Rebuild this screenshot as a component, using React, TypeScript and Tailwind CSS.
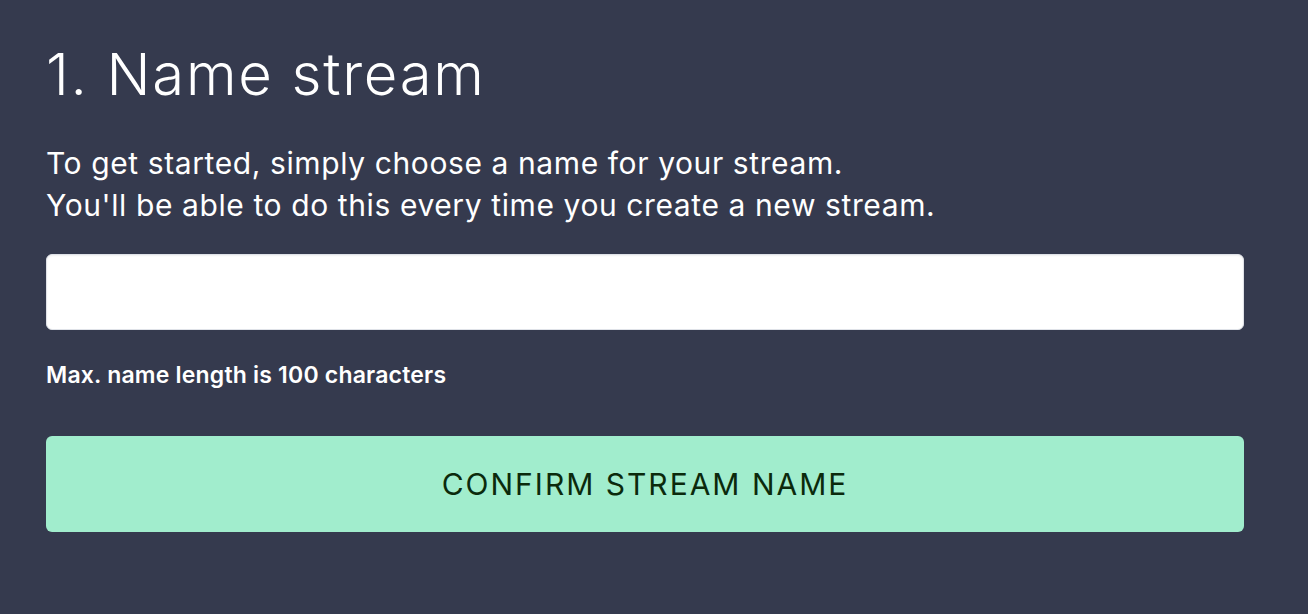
export default function App() {
  return (
    <div className="min-h-[614px] w-full bg-[#353a4e] pl-[46px] pr-[64px] pt-[45px] font-['Inter','Liberation_Sans',sans-serif] text-white">
      <h1 className="text-[58px] font-light leading-[58px] tracking-[1.7px]">1. Name stream</h1>

      <p className="mt-[39px] text-[30px] leading-[42px] tracking-[0.6px]">
        To get started, simply choose a name for your stream.
        <br />
        You'll be able to do this every time you create a new stream.
      </p>

      <input
        type="text"
        className="mt-[28px] block h-[76px] w-full rounded-[6px] border border-[#dfe2e8] bg-white px-4 text-[22px] text-gray-900 shadow-[inset_0_1px_2px_rgba(0,0,0,0.06)] outline-none"
      />

      <p className="mt-[34px] text-[23px] font-semibold leading-[23px] tracking-[0.2px]">Max. name length is 100 characters</p>

      <button
        type="button"
        className="mt-[49px] flex h-[96px] w-full items-center justify-center rounded-[6px] bg-[#a1edcd] text-[30px] font-normal uppercase tracking-[2px] text-[#0b2a0c]"
      >
        Confirm stream name
      </button>
    </div>
  );
}
